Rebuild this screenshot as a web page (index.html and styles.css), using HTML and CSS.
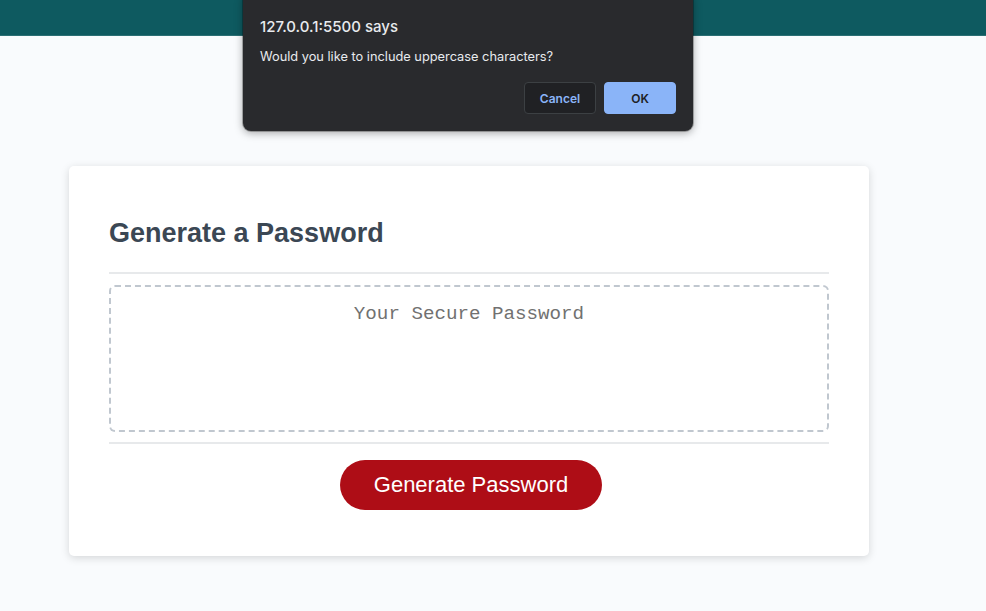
FILE: index.html
```html
<!DOCTYPE html>
<html lang="en">
<head>
<meta charset="UTF-8">
<title>Password Generator</title>
<link rel="stylesheet" href="styles.css">
</head>
<body>
<header class="topbar"></header>
<div class="wrapper">
  <div class="card">
    <div class="card-header">
      <h2 class="title">Generate a Password</h2>
    </div>
    <div class="card-body">
      <textarea readonly class="password" placeholder="Your Secure Password" aria-label="Generated Password"></textarea>
    </div>
    <div class="card-footer">
      <button class="btn">Generate Password</button>
    </div>
  </div>
</div>
<div class="dialog" role="dialog">
  <div class="dialog-title">127.0.0.1:5500 says</div>
  <div class="dialog-msg">Would you like to include uppercase characters?</div>
  <div class="dialog-actions">
    <button class="dbtn cancel">Cancel</button>
    <button class="dbtn ok">OK</button>
  </div>
</div>
</body>
</html>
```
FILE: styles.css
```css
*, *::before, *::after { box-sizing: border-box; }
html, body { margin: 0; padding: 0; height: 100%; }
body {
  font-family: "Liberation Sans", Arial, sans-serif;
  background-color: #f9fbfd;
}
.topbar {
  height: 36px;
  background: #0e5a60;
  border-bottom: 1px solid #2b6f74;
}
.wrapper {
  padding-top: 130px;
  padding-left: 69px;
}
.card {
  background: #fff;
  border-radius: 5px;
  box-shadow: rgba(0,0,0,0.15) 0 2px 8px 0;
  color: #3b4754;
  font-size: 18px;
  width: 800px;
  padding: 30px 40px;
}
.title {
  font-size: 27px;
  font-weight: bold;
  line-height: 31px;
  margin: 22.4px 0;
}
.card-header::after {
  content: " ";
  display: block;
  width: 100%;
  background: #e7e9eb;
  height: 2px;
}
.card-body { min-height: 100px; }
.password {
  appearance: none;
  -webkit-appearance: none;
  display: block;
  width: 100%;
  height: 147px;
  padding: 17px 15px 85px;
  font-family: "Courier New", "Nimbus Mono PS", "FreeMono", "Liberation Mono", monospace;
  font-size: 19.2px;
  line-height: 21.7px;
  text-align: center;
  margin: 11px 0 10px;
  border: 2px dashed #c0c7cf;
  border-radius: 6px;
  resize: none;
  overflow: hidden;
  outline: none;
  background: #fff;
}
.password::placeholder { color: #717171; }
.card-footer { text-align: center; }
.card-footer::before {
  content: " ";
  display: block;
  width: 100%;
  background: #e7e9eb;
  height: 2px;
}
.btn {
  border: none;
  background-color: #ae0d16;
  border-radius: 25px;
  color: #fff;
  display: inline-block;
  font-family: "Liberation Sans", Arial, sans-serif;
  font-size: 22px;
  line-height: 22px;
  margin: 16px 16px 16px 20px;
  padding: 14px 34px;
  cursor: pointer;
}
.dialog {
  position: absolute;
  left: 243px;
  top: -8px;
  width: 450px;
  height: 139px;
  background: #292a2d;
  border-radius: 8px;
  box-shadow: 0 2px 8px rgba(0,0,0,0.35), 0 0 0 1px rgba(0,0,0,0.25);
  padding: 26px 17px 0 17px;
  color: #e8eaed;
  font-family: Inter, "Liberation Sans", Arial, sans-serif;
}
.dialog-title {
  font-size: 15px;
  font-weight: 500;
  line-height: 17px;
}
.dialog-msg {
  font-size: 12.8px;
  line-height: 14px;
  margin-top: 15px;
}
.dialog-actions {
  display: flex;
  justify-content: flex-end;
  gap: 8px;
  margin-top: 18px;
}
.dbtn {
  width: 72px;
  height: 32px;
  border-radius: 4px;
  font-family: Inter, "Liberation Sans", Arial, sans-serif;
  font-size: 12px;
  font-weight: 600;
  cursor: pointer;
}
.cancel {
  background: #202124;
  border: 1px solid #3c4043;
  color: #8ab4f8;
}
.ok {
  background: #8ab4f8;
  border: 1px solid #8ab4f8;
  color: #202124;
}
```
